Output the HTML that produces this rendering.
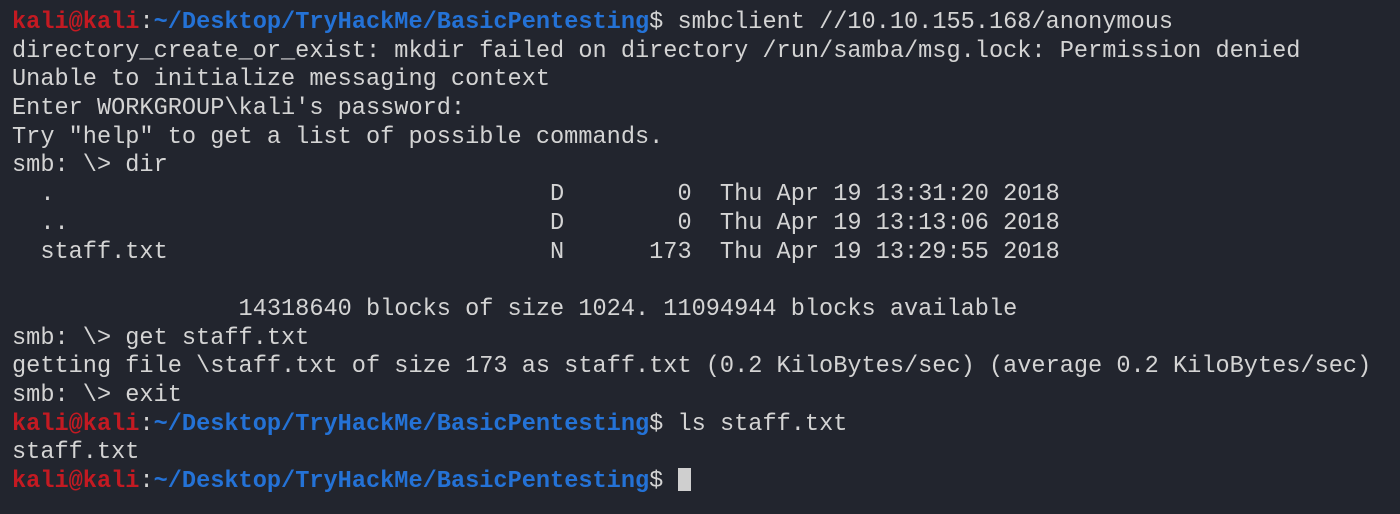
<!DOCTYPE html>
<html><head><meta charset="utf-8"><style>
html,body{margin:0;padding:0;width:1400px;height:514px;overflow:hidden;background:#22252e;}
pre{margin:0;padding:9px 0 0 12px;font-family:"Liberation Mono","DejaVu Sans Mono",monospace;font-size:23.6px;line-height:28.68px;color:#d4d4d4;white-space:pre;}
.r{color:#c41a22;font-weight:bold}
.b{color:#2472d6;font-weight:bold}
.cur{display:inline-block;width:13px;height:23px;background:#cfcfcf;vertical-align:-4px}
</style></head><body><pre><span class="r">kali@kali</span>:<span class="b">~/Desktop/TryHackMe/BasicPentesting</span>$ smbclient //10.10.155.168/anonymous
directory_create_or_exist: mkdir failed on directory /run/samba/msg.lock: Permission denied
Unable to initialize messaging context
Enter WORKGROUP\kali's password: 
Try "help" to get a list of possible commands.
smb: \&gt; dir
  .                                   D        0  Thu Apr 19 13:31:20 2018
  ..                                  D        0  Thu Apr 19 13:13:06 2018
  staff.txt                           N      173  Thu Apr 19 13:29:55 2018

                14318640 blocks of size 1024. 11094944 blocks available
smb: \&gt; get staff.txt
getting file \staff.txt of size 173 as staff.txt (0.2 KiloBytes/sec) (average 0.2 KiloBytes/sec)
smb: \&gt; exit
<span class="r">kali@kali</span>:<span class="b">~/Desktop/TryHackMe/BasicPentesting</span>$ ls staff.txt
staff.txt
<span class="r">kali@kali</span>:<span class="b">~/Desktop/TryHackMe/BasicPentesting</span>$ <span class="cur"></span></pre></body></html>
